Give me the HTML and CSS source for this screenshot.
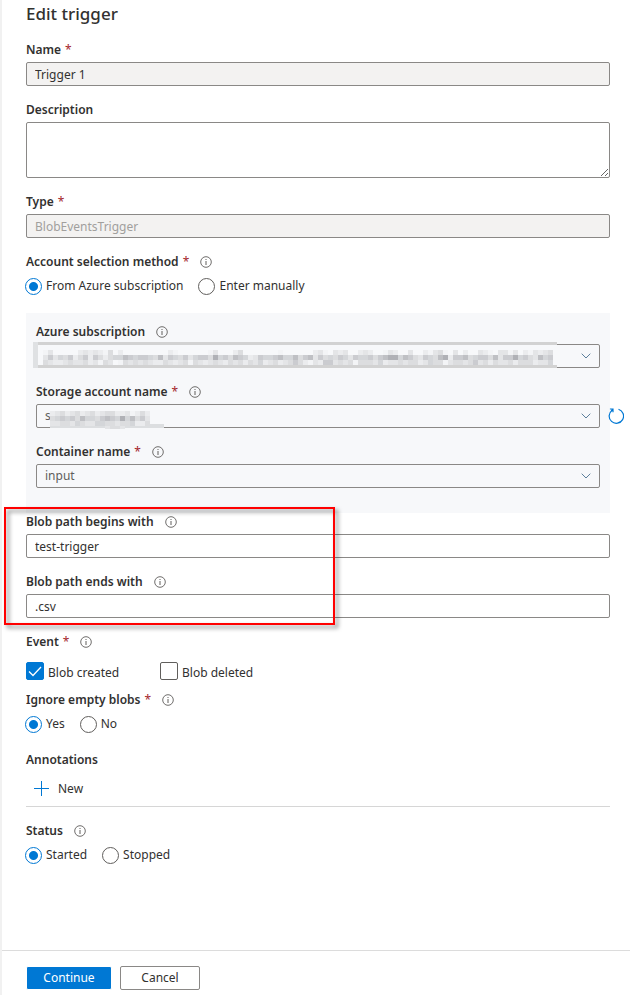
FILE: index.html
```
<!DOCTYPE html>
<html lang="en">
<head>
  <meta charset="UTF-8">
  <meta name="viewport" content="width=device-width, initial-scale=1.0">
  <title>Edit trigger</title>
  <link rel="stylesheet" href="styles.css">
</head>
<body>
  <!-- Shared icons -->
  <svg class="sprite" aria-hidden="true">
    <symbol id="info" viewBox="0 0 12 12">
      <circle cx="6" cy="6" r="5.3" fill="none" stroke="#605e5c" stroke-width="0.9"/>
      <path d="M6 5v4M6 3v1" stroke="#605e5c" stroke-width="1"/>
    </symbol>
    <symbol id="chevron" viewBox="0 0 10 6">
      <path d="M0.7 0.7L5 5L9.3 0.7" fill="none" stroke="#5c7f9c" stroke-width="1"/>
    </symbol>
  </svg>

  <form class="blade">
    <main class="content">
      <h1>Edit trigger</h1>

      <div class="field">
        <div class="label"><label for="name">Name</label><span class="required">*</span></div>
        <input class="text-box" type="text" id="name" value="Trigger 1" readonly>
      </div>

      <div class="field">
        <div class="label"><label for="description">Description</label></div>
        <textarea class="text-box" id="description"></textarea>
      </div>

      <div class="field">
        <div class="label"><label for="type">Type</label><span class="required">*</span></div>
        <input class="text-box" type="text" id="type" value="BlobEventsTrigger" disabled>
      </div>

      <div class="field" role="radiogroup" aria-labelledby="methodLabel">
        <div class="label"><span id="methodLabel">Account selection method</span><span class="required">*</span><svg class="info"><use href="#info"/></svg></div>
        <div class="radios">
          <label><input type="radio" name="method" checked>From Azure subscription</label>
          <label><input type="radio" name="method">Enter manually</label>
        </div>
      </div>

      <!-- Azure account -->
      <div class="account">
        <div class="field">
          <div class="label"><label for="subscription">Azure subscription</label><svg class="info"><use href="#info"/></svg></div>
          <div class="dropdown">
            <select id="subscription"><option></option></select>
            <svg class="chevron"><use href="#chevron"/></svg>
            <svg class="mask mask-subscription" id="maskSubscription" aria-hidden="true">
              <rect width="524" height="26" fill="#f7f8fa"/>
              <rect width="524" height="3" fill="#d2d2d2"/>
              <rect y="23" width="524" height="3" fill="#d2d2d2"/>
              <rect width="5" height="26" fill="#dfe1e3"/>
            </svg>
          </div>
        </div>
        <div class="field">
          <div class="label"><label for="storage">Storage account name</label><span class="required">*</span><svg class="info"><use href="#info"/></svg></div>
          <div class="dropdown">
            <select id="storage"><option>s</option></select>
            <svg class="chevron"><use href="#chevron"/></svg>
            <svg class="mask mask-storage" id="maskStorage" aria-hidden="true">
              <rect width="103" height="13" fill="#f7f8fa"/>
              <rect y="13" width="114" height="4" fill="#dcdee0"/>
            </svg>
            <button type="button" class="refresh" aria-label="Refresh">
              <svg viewBox="0 0 16 16"><path d="M10.5 1.2A7.2 7.2 0 1 1 4.2 2.2M1.9 1H5V4.2M5 1L3.2 3" fill="none" stroke="#0078d4" stroke-width="1.2"/></svg>
            </button>
          </div>
        </div>
        <div class="field">
          <div class="label"><label for="container">Container name</label><span class="required">*</span><svg class="info"><use href="#info"/></svg></div>
          <div class="dropdown">
            <select id="container"><option>input</option></select>
            <svg class="chevron"><use href="#chevron"/></svg>
          </div>
        </div>
      </div>

      <!-- Blob path filters -->
      <div class="paths">
        <div class="field">
          <div class="label"><label for="begins">Blob path begins with</label><svg class="info"><use href="#info"/></svg></div>
          <input class="text-box" type="text" id="begins" value="test-trigger">
        </div>
        <div class="field">
          <div class="label"><label for="ends">Blob path ends with</label><svg class="info"><use href="#info"/></svg></div>
          <input class="text-box" type="text" id="ends" value=".csv">
        </div>
        <div class="highlight"></div>
      </div>

      <div class="field event" role="group" aria-labelledby="eventLabel">
        <div class="label"><span id="eventLabel">Event</span><span class="required">*</span><svg class="info"><use href="#info"/></svg></div>
        <div class="checks">
          <label><input type="checkbox" checked><span>Blob created</span></label>
          <label><input type="checkbox"><span>Blob deleted</span></label>
        </div>
      </div>

      <div class="field" role="radiogroup" aria-labelledby="ignoreLabel">
        <div class="label"><span id="ignoreLabel">Ignore empty blobs</span><span class="required">*</span><svg class="info"><use href="#info"/></svg></div>
        <div class="radios">
          <label><input type="radio" name="ignore" checked>Yes</label>
          <label><input type="radio" name="ignore">No</label>
        </div>
      </div>

      <div class="field">
        <div class="label">Annotations</div>
        <div class="annotations">
          <button type="button" class="new">
            <svg viewBox="0 0 16 16"><path d="M7.5 0v15M0 7.5h15" stroke="#0078d4" stroke-width="1"/></svg>
            New
          </button>
        </div>
      </div>

      <div class="field" role="radiogroup" aria-labelledby="statusLabel">
        <div class="label"><span id="statusLabel">Status</span><svg class="info"><use href="#info"/></svg></div>
        <div class="radios">
          <label><input type="radio" name="status" checked>Started</label>
          <label><input type="radio" name="status">Stopped</label>
        </div>
      </div>
    </main>

    <footer>
      <button type="button" class="primary">Continue</button>
      <button type="button" class="secondary">Cancel</button>
    </footer>
  </form>

  <script src="mask.js"></script>
</body>
</html>
```
FILE: styles.css
```
* {
  box-sizing: border-box;
}
body {
  margin: 0;
  background: #fff;
  color: #323130;
  font-family: "Noto Sans", "Open Sans", sans-serif;
  font-size: 12px;
  line-height: 18px;
}
input,
textarea,
select,
button {
  margin: 0;
  font: inherit;
  color: inherit;
}
.sprite {
  position: absolute;
  width: 0;
  height: 0;
}
.blade {
  display: flex;
  flex-direction: column;
  min-height: 100vh;
  border-left: 2px solid #f1f1f1;
}
.content {
  flex: 1;
  padding: 2px 20px 0 24px;
}
h1 {
  margin: 0 0 15px;
  font-size: 17px;
  font-weight: 500;
  line-height: 24px;
}

/* Fields */
.field {
  margin-bottom: 15px;
}
.label {
  display: flex;
  align-items: center;
  margin-bottom: 3px;
  font-weight: 600;
}
.required {
  margin-left: 4px;
  color: #a4262c;
  font-weight: 400;
}
.info {
  width: 12px;
  height: 12px;
  margin-left: 11px;
}
.text-box {
  display: block;
  width: 100%;
  height: 24px;
  padding: 0 8px;
  border: 1px solid #8a8886;
  border-radius: 2px;
  background: #fff;
}
textarea.text-box {
  height: 56px;
  resize: vertical;
}
.text-box:read-only,
.text-box:disabled {
  background: #f3f2f1;
}
.text-box:disabled {
  color: #a19f9d;
}

/* Radio buttons and checkboxes */
.radios {
  display: flex;
  gap: 15px;
  height: 24px;
  margin-left: -1px;
}
.radios label {
  display: flex;
  align-items: center;
  gap: 4px;
}
input[type="radio"] {
  appearance: none;
  width: 17px;
  height: 17px;
  border: 1px solid #605e5c;
  border-radius: 50%;
}
input[type="radio"]:checked {
  border-color: #0078d4;
  background: radial-gradient(circle, #0078d4 4px, transparent 5px);
}
.checks {
  display: grid;
  grid-template-columns: 134px 134px;
  padding-top: 8px;
}
.checks label {
  display: flex;
  gap: 4px;
  height: 18px;
}
.checks span {
  padding-top: 2px;
}
input[type="checkbox"] {
  appearance: none;
  width: 18px;
  height: 18px;
  border: 1px solid #605e5c;
  border-radius: 2px;
}
input[type="checkbox"]:checked {
  border-color: #0078d4;
  background: #0078d4 url("data:image/svg+xml,%3Csvg xmlns='http://www.w3.org/2000/svg' viewBox='0 0 16 16'%3E%3Cpath d='M2 8.5L6 12.5L14 4' fill='none' stroke='white' stroke-width='1.3'/%3E%3C/svg%3E");
}
.event {
  margin-bottom: 11px;
}

/* Account panel */
.account {
  padding: 10px;
  background: #f7f8fa;
}
.dropdown {
  position: relative;
}
.dropdown select {
  display: block;
  appearance: none;
  width: 100%;
  height: 24px;
  padding: 0 30px 0 8px;
  border: 1px solid #8a8886;
  border-radius: 2px;
  background: transparent;
  color: #605e5c;
}
.chevron {
  position: absolute;
  top: 9px;
  right: 9px;
  width: 10px;
  height: 6px;
  pointer-events: none;
}
.refresh {
  position: absolute;
  top: 4px;
  right: -24px;
  width: 16px;
  height: 16px;
  padding: 0;
  border: 0;
  background: none;
}
.refresh svg {
  display: block;
}
.mask {
  position: absolute;
  pointer-events: none;
}
.mask-subscription {
  top: -2px;
  left: -3px;
  width: 524px;
  height: 26px;
}
.mask-storage {
  top: 7px;
  left: 14px;
  width: 114px;
  height: 18px;
}

/* Red frame around the path filters */
.paths {
  position: relative;
}
.highlight {
  position: absolute;
  top: -6px;
  bottom: -7px;
  left: -22px;
  width: 331px;
  border: 2px solid #f00;
  filter: drop-shadow(3px 3px 2px rgba(0, 0, 0, 0.5));
  pointer-events: none;
}

.annotations {
  border-bottom: 1px solid #d6d6d6;
}
.new {
  display: flex;
  align-items: center;
  gap: 8px;
  height: 34px;
  padding: 0 8px;
  border: 0;
  background: none;
}
.new svg {
  width: 16px;
  height: 16px;
}

footer {
  display: flex;
  gap: 8px;
  padding: 15px 24px 5px;
  border-top: 1px solid #dcdcdc;
}
footer button {
  min-width: 80px;
  height: 24px;
  padding: 0 15px;
  border: 1px solid #8a8886;
  border-radius: 2px;
  background: #fff;
}
footer .primary {
  min-width: 86px;
  border-color: #fff;
  background: #0078d4;
  color: #fff;
}
```
FILE: mask.js
```
// Mosaic over the account values, one digit per cell, higher is darker
const shades = ['', '#f3f4f6', '#ebecee', '#e4e5e7', '#dcdddf', '#d4d6d9', '#cbccd0', '#bfc0c4', '#b0b1b6'];

function drawMask(id, rows, left, top, size) {
  const svg = document.getElementById(id);
  rows.forEach((row, y) => {
    [...row].forEach((level, x) => {
      if (level === '0') return;
      const cell = document.createElementNS('http://www.w3.org/2000/svg', 'rect');
      cell.setAttribute('x', left + x * size);
      cell.setAttribute('y', top + y * size);
      cell.setAttribute('width', size);
      cell.setAttribute('height', size);
      cell.setAttribute('fill', shades[level]);
      svg.appendChild(cell);
    });
  });
}

drawMask('maskSubscription', [
  '130000023232140200000000021000000130002400000001000000231032300232001320030021341030200321033130213234',
  '363546246264245576566547365463566485647652365567557467364546536556467885764365478266745664736685643756',
  '432234334231430143434322432341432343243424352342346421326634341444352334344235441344346342433424442335'
], 10, 8, 5);

drawMask('maskStorage', [
  '23423423423442231242',
  '45656475546765857463',
  '33443543355443445224',
  '00000000000344300000'
], 0, 0, 5);
```
